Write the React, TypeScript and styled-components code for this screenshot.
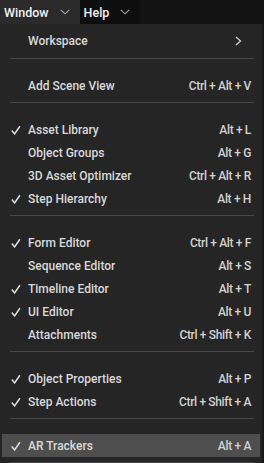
import styled, { createGlobalStyle } from "styled-components";

const GlobalStyle = createGlobalStyle`
  html, body {
    margin: 0;
    padding: 0;
    background: #181818;
  }
  body {
    font-family: Roboto, "Liberation Sans", sans-serif;
  }
`;

const Screen = styled.div`
  width: 264px;
  height: 463px;
  overflow: hidden;
  display: flex;
  flex-direction: column;
`;

const MenuBar = styled.div`
  display: flex;
  flex-shrink: 0;
  height: 24px;
  background: #131313;
`;

const Tab = styled.div<{ $active?: boolean }>`
  display: flex;
  align-items: center;
  gap: 11px;
  padding: 0 10px 0 4px;
  background: ${(p) => (p.$active ? "#2a2a2a" : "#0e0e0e")};
  color: #f2f2f2;
  font-size: 12.5px;
  font-weight: 500;
`;

const Dropdown = styled.div`
  width: 262px;
  flex: 1;
  background: #252525;
  padding: 5px 2px 0 2px;
  box-sizing: border-box;
`;

const Item = styled.div<{ $highlight?: boolean; $tall?: boolean }>`
  display: grid;
  grid-template-columns: 26px 1fr auto;
  align-items: center;
  height: ${(p) => (p.$tall ? 24 : 23)}px;
  padding-right: 9px;
  background: ${(p) => (p.$highlight ? "#4e4e4e" : "transparent")};
  color: #d9d9d9;
  font-size: 12px;
  font-weight: 500;
`;

const Check = styled.svg`
  width: 10px;
  height: 10px;
  margin-left: 9px;
`;

const Label = styled.span`
  white-space: nowrap;
`;

const Shortcut = styled.span`
  color: #d2d2d2;
  font-size: 12px;
  letter-spacing: -0.35px;
  white-space: nowrap;
`;

const SubArrow = styled.svg`
  width: 7px;
  height: 10px;
  margin-right: 9px;
`;

const Separator = styled.div`
  height: 1px;
  margin: 5px 6px 15px 8px;
  background: #474747;
`;

const ChevronDown = () => (
  <svg width="10" height="6" viewBox="0 0 10 6">
    <path d="M0.8 0.8 L5 4.8 L9.2 0.8" fill="none" stroke="#a8a8a8" strokeWidth="1.1" />
  </svg>
);

const CheckMark = () => (
  <Check viewBox="0 0 10 10">
    <path d="M0.8 5.6 L3.6 8.9 L8.9 1.2" fill="none" stroke="#e0e0e0" strokeWidth="1.5" />
  </Check>
);

type Entry = { label: string; keys?: string; checked?: boolean; highlight?: boolean };

const groups: Entry[][] = [
  [{ label: "Add Scene View", keys: "Ctrl + Alt + V" }],
  [
    { label: "Asset Library", keys: "Alt + L", checked: true },
    { label: "Object Groups", keys: "Alt + G" },
    { label: "3D Asset Optimizer", keys: "Ctrl + Alt + R" },
    { label: "Step Hierarchy", keys: "Alt + H", checked: true },
  ],
  [
    { label: "Form Editor", keys: "Ctrl + Alt + F", checked: true },
    { label: "Sequence Editor", keys: "Alt + S" },
    { label: "Timeline Editor", keys: "Alt + T", checked: true },
    { label: "UI Editor", keys: "Alt + U", checked: true },
    { label: "Attachments", keys: "Ctrl + Shift + K" },
  ],
  [
    { label: "Object Properties", keys: "Alt + P", checked: true },
    { label: "Step Actions", keys: "Ctrl + Shift + A", checked: true },
  ],
  [{ label: "AR Trackers", keys: "Alt + A", checked: true, highlight: true }],
];

const App = () => {
  return (
    <Screen>
      <GlobalStyle />
      <MenuBar>
        <Tab $active>
          Window
          <ChevronDown />
        </Tab>
        <Tab>
          Help
          <ChevronDown />
        </Tab>
      </MenuBar>
      <Dropdown>
        <Item $tall>
          <span />
          <Label>Workspace</Label>
          <SubArrow viewBox="0 0 7 10">
            <path d="M1 1 L5.5 5 L1 9" fill="none" stroke="#d0d0d0" strokeWidth="1.3" />
          </SubArrow>
        </Item>
        <Separator />
        {groups.map((group, gi) => (
          <div key={gi}>
            {group.map((e) => (
              <Item key={e.label} $highlight={e.highlight}>
                {e.checked ? <CheckMark /> : <span />}
                <Label>{e.label}</Label>
                <Shortcut>{e.keys}</Shortcut>
              </Item>
            ))}
            <Separator />
          </div>
        ))}
      </Dropdown>
    </Screen>
  );
};

export default App;
